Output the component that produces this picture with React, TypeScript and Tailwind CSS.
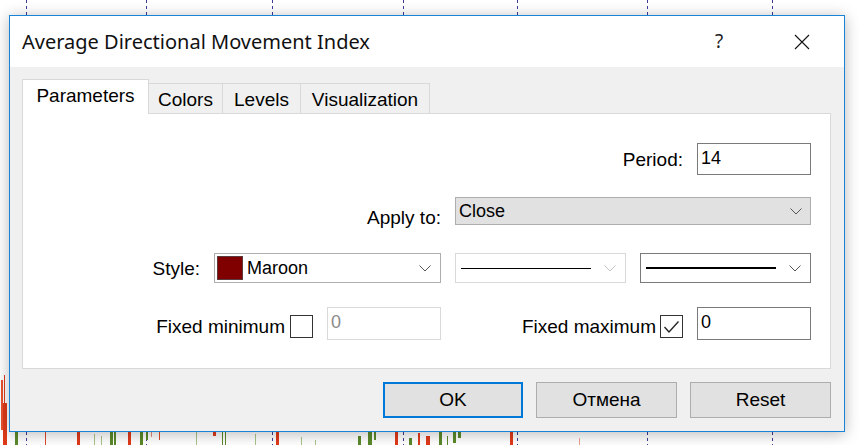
import React from 'react'

const gridX = [26, 146, 272, 403, 517, 647, 772]

// candles peeking out under the dialog: x, top, bottom, width, colour
const candles: [number, number, number, number, string][] = [
    [1, 380, 430, 2, '#e8512f'],
    [3, 403, 445, 4, '#e03a1a'],
    [15, 430, 445, 3, '#5a8a2a'],
    [45, 430, 445, 1, '#e04a2a'],
    [77, 430, 445, 3, '#e03a1a'],
    [94, 434, 445, 1, '#a9c48a'],
    [101, 436, 445, 1, '#a9c48a'],
    [110, 430, 445, 3, '#5a8a2a'],
    [114, 432, 445, 2, '#5a8a2a'],
    [128, 430, 445, 3, '#e03a1a'],
    [140, 430, 445, 3, '#5a8a2a'],
    [146, 430, 440, 2, '#5a8a2a'],
    [151, 430, 437, 1, '#e88a7a'],
    [159, 430, 440, 1, '#e04a2a'],
    [196, 432, 445, 1, '#a9c48a'],
    [213, 430, 436, 3, '#e03a1a'],
    [222, 430, 445, 1, '#5a8a2a'],
    [225, 432, 445, 1, '#5a8a2a'],
    [255, 434, 445, 1, '#a9c48a'],
    [276, 430, 445, 3, '#e03a1a'],
    [301, 437, 445, 1, '#a9c48a'],
    [315, 440, 445, 1, '#a9c48a'],
    [358, 436, 445, 3, '#5a8a2a'],
    [368, 430, 445, 4, '#5a8a2a'],
    [374, 430, 440, 2, '#5a8a2a'],
    [395, 430, 445, 3, '#e03a1a'],
    [409, 438, 445, 3, '#5a8a2a'],
    [418, 433, 445, 2, '#e03a1a'],
    [426, 436, 445, 4, '#e03a1a'],
    [439, 432, 445, 3, '#5a8a2a'],
    [447, 436, 445, 1, '#5a8a2a'],
    [453, 430, 443, 3, '#5a8a2a'],
    [458, 430, 438, 3, '#5a8a2a'],
    [510, 430, 445, 3, '#e03a1a'],
    [579, 438, 445, 1, '#f0a090'],
]

function Chevron({ light = false }: { light?: boolean }) {
    return (
        <svg width="12" height="7" viewBox="0 0 12 7" className="shrink-0">
            <path d="M0.5 0.5 L6 6 L11.5 0.5" fill="none" stroke={light ? '#c4c4c4' : '#555'} strokeWidth="1" />
        </svg>
    )
}

function Checkbox({ checked = false }: { checked?: boolean }) {
    return (
        <div className="flex h-[23px] w-[23px] shrink-0 items-center justify-center border border-[#333] bg-white">
            {checked && (
                <svg width="17" height="14" viewBox="0 0 17 14">
                    <path d="M1.5 7 L6 12 L15.5 1.5" fill="none" stroke="#222" strokeWidth="1.3" />
                </svg>
            )}
        </div>
    )
}

export default function App() {
    return (
        <div
            className="relative h-[445px] w-[860px] overflow-hidden bg-white text-black"
            style={{ fontFamily: '"Liberation Sans", Arial, sans-serif' }}
        >
            {/* chart behind the dialog */}
            <svg className="absolute inset-0" width="860" height="445">
                {gridX.map((x) => (
                    <line key={x} x1={x + 0.5} y1={0} x2={x + 0.5} y2={445} stroke="#3c3c96" strokeDasharray="3 3" strokeWidth="1" />
                ))}
                {candles.map(([x, y1, y2, w, c], i) => (
                    <rect key={i} x={x} y={y1} width={w} height={y2 - y1} fill={c} />
                ))}
                <line x1={4.5} y1={375} x2={4.5} y2={445} stroke="#e03a1a" />
            </svg>

            {/* dialog window */}
            <div className="absolute left-[9px] top-[15px] flex h-[417px] w-[836px] flex-col border border-[#1883d7] bg-[#f0f0f0] shadow-[0_2px_14px_rgba(0,0,0,0.28)]">
                {/* Title bar */}
                <div className="flex h-[51px] items-center bg-white pl-[12px] pr-[22px]">
                    <div
                        className="flex-1 text-[20px] text-[#111]"
                        style={{ fontFamily: '"Noto Sans", "Open Sans", sans-serif' }}
                    >
                        Average Directional Movement Index
                    </div>
                    <div
                        className="w-[40px] text-center text-[19px] text-[#222]"
                        style={{ fontFamily: '"Noto Sans", sans-serif' }}
                    >
                        ?
                    </div>
                    <div className="ml-[43px] flex w-[40px] justify-center">
                        <svg width="16" height="16" viewBox="0 0 16 16">
                            <path d="M1 1 L15 15 M15 1 L1 15" stroke="#111" strokeWidth="1.1" />
                        </svg>
                    </div>
                </div>

                {/* Body */}
                <div className="flex flex-1 flex-col pl-[12px] pr-[13px] pt-[12px]">
                    {/* Tabs */}
                    <div className="flex items-end text-[19px]">
                        <div className="relative z-10 -mb-px flex h-[35px] w-[127px] items-center justify-center border border-b-0 border-[#d9d9d9] bg-white pb-[2px]">
                            Parameters
                        </div>
                        <div className="flex h-[30px] w-[74px] items-center justify-center border-r border-t border-[#d9d9d9] pt-[3px]">
                            Colors
                        </div>
                        <div className="flex h-[30px] w-[78px] items-center justify-center border-r border-t border-[#d9d9d9] pt-[3px]">
                            Levels
                        </div>
                        <div className="flex h-[30px] w-[129px] items-center justify-center border-r border-t border-[#d9d9d9] pt-[3px]">
                            Visualization
                        </div>
                    </div>

                    {/* Panel */}
                    <div className="flex h-[256px] flex-col border border-[#d9d9d9] bg-white pr-[19px] pt-[29px] text-[19px] leading-[22px]">
                        {/* Period */}
                        <div className="flex h-[32px] items-center justify-end gap-[14px]">
                            <span className="translate-y-[1px]">Period:</span>
                            <div className="h-[32px] w-[114px] border border-[#7a7a7a] pl-[3px] pt-[3px] text-[18px] leading-[22px]">
                                14
                            </div>
                        </div>

                        {/* Apply to */}
                        <div className="mt-[22px] flex h-[28px] items-center justify-end gap-[14px]">
                            <span className="translate-y-[7px]">Apply to:</span>
                            <div className="flex h-[28px] w-[356px] items-center justify-between border border-[#adadad] bg-[#e1e1e1] pl-[3px] pr-[8px]">
                                <span className="text-[18px]">Close</span>
                                <Chevron />
                            </div>
                        </div>

                        {/* Style */}
                        <div className="mt-[28px] flex h-[30px] items-center justify-end gap-[14px]">
                            <span className="translate-y-[1px]">Style:</span>
                            <div className="flex h-[30px] w-[227px] items-center border border-[#adadad] pl-[2px] pr-[9px]">
                                <div className="h-[24px] w-[26px] border border-[#5a3a3a] bg-[#800000]" />
                                <span className="ml-[4px] flex-1 text-[18px]">Maroon</span>
                                <Chevron />
                            </div>
                            <div className="flex h-[30px] w-[171px] items-center border border-[#d9d9d9] pl-[5px] pr-[9px]">
                                <div className="h-px w-[130px] bg-black" />
                                <div className="flex-1" />
                                <Chevron light />
                            </div>
                            <div className="flex h-[30px] w-[171px] items-center border border-[#7a7a7a] pl-[5px] pr-[9px]">
                                <div className="h-[2px] w-[130px] bg-black" />
                                <div className="flex-1" />
                                <Chevron />
                            </div>
                        </div>

                        {/* Fixed min / max */}
                        <div className="mt-[24px] flex h-[33px] items-center justify-end">
                            <div className="flex items-center">
                                <span className="translate-y-[3px]">Fixed minimum</span>
                                <div className="ml-[5px] translate-y-[3px]">
                                    <Checkbox />
                                </div>
                                <div className="ml-[14px] h-[33px] w-[114px] border border-[#d9d9d9] pl-[3px] pt-[3px] text-[18px] leading-[22px] text-[#8a8a8a]">
                                    0
                                </div>
                            </div>
                            <div className="ml-[14px] flex w-[356px] items-center justify-end">
                                <span className="translate-y-[3px]">Fixed maximum</span>
                                <div className="ml-[4px] translate-y-[3px]">
                                    <Checkbox checked />
                                </div>
                                <div className="ml-[14px] h-[33px] w-[114px] border border-[#7a7a7a] pl-[3px] pt-[3px] text-[18px] leading-[22px]">
                                    0
                                </div>
                            </div>
                        </div>
                    </div>

                    {/* Buttons */}
                    <div className="mt-[13px] flex justify-end gap-[13px] text-[19px]">
                        <button className="h-[36px] w-[140px] border-2 border-[#0078d7] bg-[#e1e1e1]">OK</button>
                        <button className="h-[36px] w-[141px] border border-[#adadad] bg-[#e1e1e1]">Отмена</button>
                        <button className="h-[36px] w-[141px] border border-[#adadad] bg-[#e1e1e1]">Reset</button>
                    </div>
                </div>
            </div>
        </div>
    )
}
